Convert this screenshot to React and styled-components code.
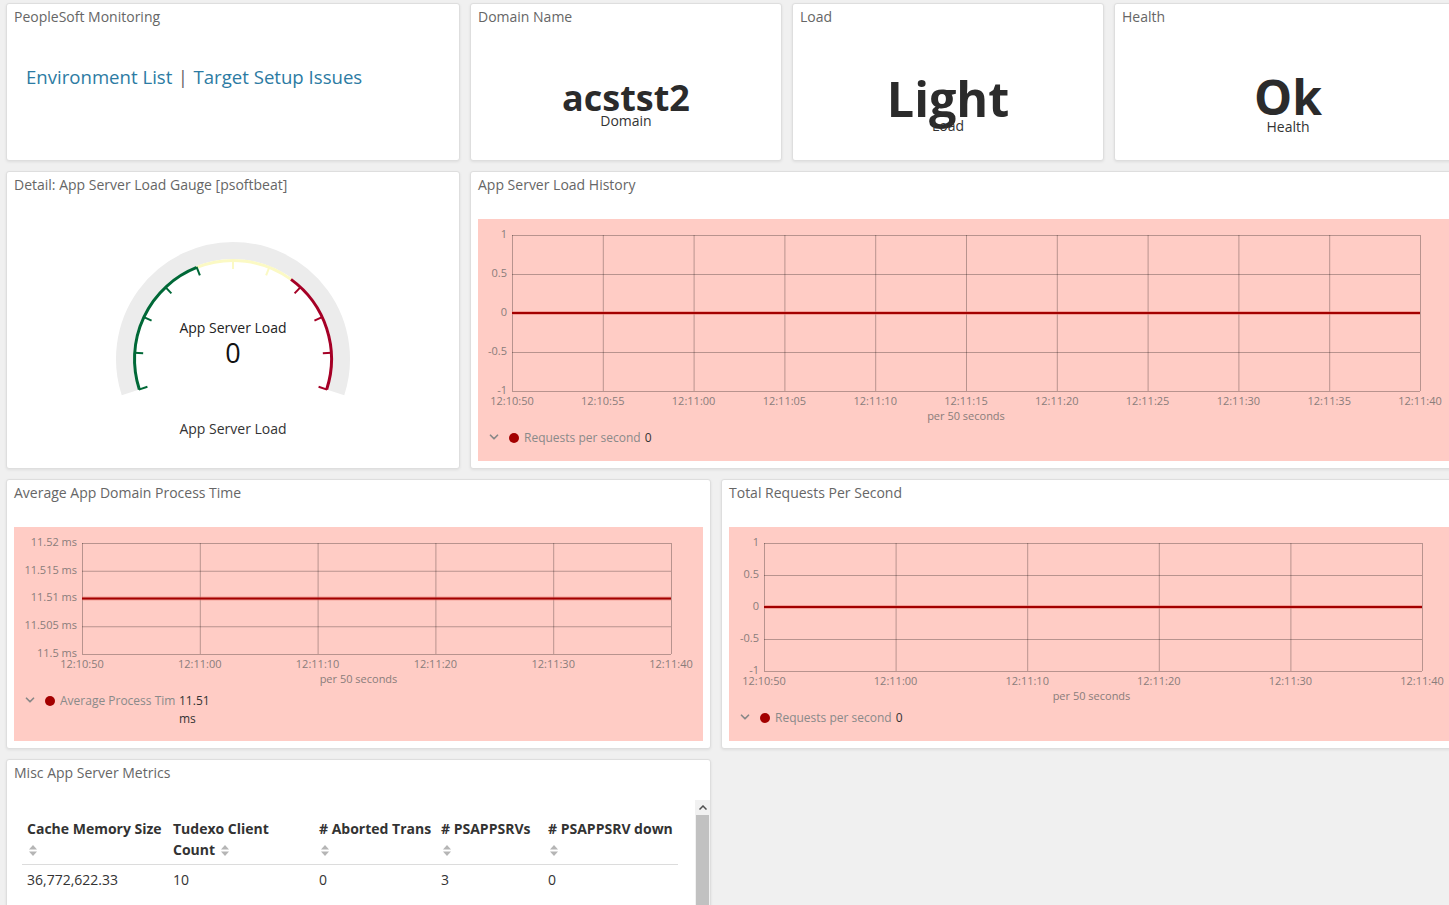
import styled, { createGlobalStyle } from 'styled-components';
import { ChevronDown } from 'lucide-react';

const GlobalStyle = createGlobalStyle`
  html, body {
    margin: 0;
    padding: 0;
    overflow: hidden;
    background: #f0f0f0;
    font-family: 'Open Sans', 'Noto Sans', sans-serif;
  }
`;

// ---- layout ----
const Dashboard = styled.div`
  display: flex;
  flex-direction: column;
  gap: 10px;
  padding: 3px 0 0 6px;
  width: 1460px;
`;

const Row = styled.div`
  display: flex;
  gap: 10px;
  height: ${({ $h }) => $h}px;
`;

const Panel = styled.div`
  display: flex;
  flex-direction: column;
  flex: none;
  width: ${({ $w }) => $w}px;
  box-sizing: border-box;
  background: #fff;
  border: 1px solid #dedede;
  border-radius: 3px;
  box-shadow: 0 1px 3px rgba(0, 0, 0, 0.08);
  overflow: hidden;
`;

const PanelTitle = styled.div`
  height: 24px;
  padding: 3px 0 0 7px;
  box-sizing: border-box;
  font-size: 14px;
  line-height: 20px;
  color: #666;
  flex: none;
`;

// ---- markdown panel ----
const LinksBody = styled.div`
  padding: 37px 0 0 19px;
  font-size: 18.6px;
  line-height: 24px;
  color: #555;
`;

const Link = styled.a`
  color: #2c7ba3;
  text-decoration: none;
`;

const Pipe = styled.span`
  margin: 0 5.5px;
  color: #666;
`;

// ---- metric panels ----
const MetricBody = styled.div`
  flex: 1;
  display: flex;
  flex-direction: column;
  align-items: center;
  justify-content: center;
  padding-top: 20px;
  color: #2b2b2b;
`;

const MetricValue = styled.div`
  font-size: ${({ $size }) => $size}px;
  font-weight: 700;
  line-height: 1;
`;

const MetricLabel = styled.div`
  font-size: 14px;
  line-height: 17px;
  color: #333;
  margin-top: ${({ $mt }) => $mt || 0}px;
`;

// ---- gauge ----
const GaugeBody = styled.div`
  display: flex;
  flex-direction: column;
  align-items: center;
`;

const GaugeLabel = styled.div`
  margin-top: 3px;
  font-size: 14px;
  line-height: 20px;
  color: #333;
`;

// ---- charts ----
const ChartArea = styled.div`
  flex: 1;
  margin: 23px 7px 7px;
  background: #ffccc5;
  display: flex;
  flex-direction: column;
`;

const Legend = styled.div`
  display: flex;
  align-items: flex-start;
  padding: 2px 0 0 ${({ $pl }) => $pl}px;
  font-size: 12px;
  line-height: 18px;
  color: #8a8a8a;
`;

const LegendChevron = styled.span`
  display: flex;
  color: #888;
  margin-top: 1px;
`;

const LegendDot = styled.span`
  width: 10px;
  height: 10px;
  border-radius: 50%;
  background: #a30000;
  margin: 4px 5px 0 8px;
  flex: none;
`;

const LegendName = styled.span`
  white-space: nowrap;
  overflow: hidden;
  max-width: ${({ $max }) => ($max ? `${$max}px` : 'none')};
`;

const LegendValue = styled.span`
  color: #333;
  margin-left: 4px;
  max-width: ${({ $max }) => ($max ? `${$max}px` : 'none')};
`;

// ---- table ----
const ScrollArea = styled.div`
  display: flex;
  margin: 16px 0 0 15px;
  flex: 1;
`;

const TableBox = styled.div`
  flex: 1;
  min-width: 0;
`;

const Table = styled.table`
  width: 656px;
  border-collapse: collapse;
  table-layout: fixed;
  font-size: 14px;
  color: #333;
`;

const Th = styled.th`
  width: ${({ $w }) => $w}px;
  box-sizing: border-box;
  text-align: left;
  font-weight: 700;
  vertical-align: top;
  line-height: 21px;
  padding: 18px 4px 4px 5px;
  border-bottom: 1px solid #dcdcdc;
`;

const Td = styled.td`
  padding: 4px 5px;
  line-height: 21px;
`;

const SortIcon = styled.svg`
  display: inline-block;
  vertical-align: -1px;
  margin-left: 2px;
`;

const Scrollbar = styled.div`
  width: 15px;
  flex: none;
  display: flex;
  flex-direction: column;
  background: #f1f1f1;
`;

const ScrollArrow = styled.div`
  height: 15px;
  display: flex;
  align-items: center;
  justify-content: center;
  color: #505050;
`;

const ScrollThumb = styled.div`
  flex: 1;
  margin: 0 1px;
  background: #c1c1c1;
`;

// ---- drawings ----
const pt = (cx, cy, r, deg) => {
  const a = (deg * Math.PI) / 180;
  return [cx + r * Math.sin(a), cy - r * Math.cos(a)];
};

const arc = (cx, cy, r, a0, a1) => {
  const [x0, y0] = pt(cx, cy, r, a0);
  const [x1, y1] = pt(cx, cy, r, a1);
  const large = a1 - a0 > 180 ? 1 : 0;
  return `M${x0} ${y0} A${r} ${r} 0 ${large} 1 ${x1} ${y1}`;
};

const GREEN = '#006837';
const YELLOW = '#fbf9c4';
const RED = '#a50026';

function Gauge() {
  const cx = 220;
  const cy = 163;
  const toDeg = (f) => -108 + f * 216;
  const ranges = [
    [0, 0.4, GREEN],
    [0.4, 0.667, YELLOW],
    [0.667, 1, RED],
  ];
  const ticks = Array.from({ length: 11 }, (_, k) => k / 10);
  const tickColor = (f) => (f <= 0.4 ? GREEN : f < 0.667 ? YELLOW : RED);
  return (
    <svg width="440" height="220" viewBox="0 0 440 220">
      <path d={arc(cx, cy, 108.5, -108, 108)} stroke="#ececec" strokeWidth="17" fill="none" />
      {ranges.map(([a, b, c]) => (
        <path key={a} d={arc(cx, cy, 98.5, toDeg(a), toDeg(b))} stroke={c} strokeWidth="3" fill="none" />
      ))}
      {ticks.map((f) => {
        const [x0, y0] = pt(cx, cy, 99, toDeg(f));
        const [x1, y1] = pt(cx, cy, 90, toDeg(f));
        return <line key={f} x1={x0} y1={y0} x2={x1} y2={y1} stroke={tickColor(f)} strokeWidth="2" />;
      })}
      <text x={cx} y="133" textAnchor="middle" dominantBaseline="middle" fontSize="14" fill="#222" fontFamily="Open Sans">
        App Server Load
      </text>
      <text x={cx} y="160" textAnchor="middle" dominantBaseline="middle" fontSize="27" fill="#111" fontFamily="Open Sans">
        0
      </text>
    </svg>
  );
}

function LineChart({ width, height, left, right, top, bottom, yLabels, xLabels, lineAt }) {
  const pw = right - left;
  const ph = bottom - top;
  const grid = '#000';
  const labelColor = '#8a7d7b';
  return (
    <svg width={width} height={height} style={{ display: 'block', flex: 'none' }}>
      {yLabels.map((l, i) => {
        const y = top + (ph * i) / (yLabels.length - 1);
        return (
          <g key={l}>
            <line x1={left} x2={right} y1={y + 0.5} y2={y + 0.5} stroke={grid} strokeOpacity="0.28" />
            <text x={left - 5} y={y} textAnchor="end" dominantBaseline="middle" fontSize="11" fill={labelColor} fontFamily="Open Sans">
              {l}
            </text>
          </g>
        );
      })}
      {xLabels.map((l, i) => {
        const x = left + (pw * i) / (xLabels.length - 1);
        return (
          <g key={l}>
            <line x1={x + 0.5} x2={x + 0.5} y1={top} y2={bottom} stroke={grid} strokeOpacity="0.28" />
            <text x={x} y={bottom + 11} textAnchor="middle" dominantBaseline="middle" fontSize="11" fill={labelColor} fontFamily="Open Sans">
              {l}
            </text>
          </g>
        );
      })}
      <line x1={left} x2={right} y1={top + ph * lineAt} y2={top + ph * lineAt} stroke="#e8746c" strokeWidth="4" strokeOpacity="0.5" />
      <line x1={left} x2={right} y1={top + ph * lineAt} y2={top + ph * lineAt} stroke="#a30000" strokeWidth="2" />
      <text x={width / 2} y={bottom + 26} textAnchor="middle" dominantBaseline="middle" fontSize="11" fill={labelColor} fontFamily="Open Sans">
        per 50 seconds
      </text>
    </svg>
  );
}

function ChartLegend({ pl, name, value, nameMax, valueMax }) {
  return (
    <Legend $pl={pl}>
      <LegendChevron>
        <ChevronDown size={14} strokeWidth={3} />
      </LegendChevron>
      <LegendDot />
      <LegendName $max={nameMax}>{name}</LegendName>
      <LegendValue $max={valueMax}>{value}</LegendValue>
    </Legend>
  );
}

function Sort() {
  return (
    <SortIcon width="8" height="11" viewBox="0 0 8 11">
      <path d="M4 0 L8 4.5 H0 Z" fill="#b5b5b5" />
      <path d="M4 11 L8 6.5 H0 Z" fill="#b5b5b5" />
    </SortIcon>
  );
}

const seq = (start, step, n) =>
  Array.from({ length: n }, (_, i) => {
    const s = start + step * i;
    const m = 10 + Math.floor(s / 60);
    const sec = s % 60;
    return `12:${m}:${String(sec).padStart(2, '0')}`;
  });

export default function App() {
  return (
    <>
      <GlobalStyle />
      <Dashboard>
        <Row $h={158}>
          <Panel $w={454}>
            <PanelTitle>PeopleSoft Monitoring</PanelTitle>
            <LinksBody>
              <Link href="#">Environment List</Link>
              <Pipe>|</Pipe>
              <Link href="#">Target Setup Issues</Link>
            </LinksBody>
          </Panel>
          <Panel $w={312}>
            <PanelTitle>Domain Name</PanelTitle>
            <MetricBody>
              <MetricValue $size={36}>acstst2</MetricValue>
              <MetricLabel $mt={-4}>Domain</MetricLabel>
            </MetricBody>
          </Panel>
          <Panel $w={312}>
            <PanelTitle>Load</PanelTitle>
            <MetricBody>
              <MetricValue $size={48.5}>Light</MetricValue>
              <MetricLabel $mt={-5}>Load</MetricLabel>
            </MetricBody>
          </Panel>
          <Panel $w={348}>
            <PanelTitle>Health</PanelTitle>
            <MetricBody>
              <MetricValue $size={48}>Ok</MetricValue>
              <MetricLabel $mt={-3}>Health</MetricLabel>
            </MetricBody>
          </Panel>
        </Row>

        <Row $h={298}>
          <Panel $w={454}>
            <PanelTitle>Detail: App Server Load Gauge [psoftbeat]</PanelTitle>
            <GaugeBody>
              <Gauge />
              <GaugeLabel>App Server Load</GaugeLabel>
            </GaugeBody>
          </Panel>
          <Panel $w={992}>
            <PanelTitle>App Server Load History</PanelTitle>
            <ChartArea>
              <LineChart
                width={976}
                height={208}
                left={34}
                right={942}
                top={16}
                bottom={172}
                yLabels={['1', '0.5', '0', '-0.5', '-1']}
                xLabels={seq(50, 5, 11)}
                lineAt={0.5}
              />
              <ChartLegend pl={9} name="Requests per second" value="0" />
            </ChartArea>
          </Panel>
        </Row>

        <Row $h={270}>
          <Panel $w={705}>
            <PanelTitle>Average App Domain Process Time</PanelTitle>
            <ChartArea>
              <LineChart
                width={689}
                height={163}
                left={68}
                right={657}
                top={16}
                bottom={127}
                yLabels={['11.52 ms', '11.515 ms', '11.51 ms', '11.505 ms', '11.5 ms']}
                xLabels={seq(50, 10, 6)}
                lineAt={0.5}
              />
              <ChartLegend pl={9} name="Average Process Time" value="11.51 ms" nameMax={115} valueMax={34} />
            </ChartArea>
          </Panel>
          <Panel $w={741}>
            <PanelTitle>Total Requests Per Second</PanelTitle>
            <ChartArea>
              <LineChart
                width={725}
                height={180}
                left={35}
                right={693}
                top={16}
                bottom={144}
                yLabels={['1', '0.5', '0', '-0.5', '-1']}
                xLabels={seq(50, 10, 6)}
                lineAt={0.5}
              />
              <ChartLegend pl={9} name="Requests per second" value="0" />
            </ChartArea>
          </Panel>
        </Row>

        <Row $h={300}>
          <Panel $w={705}>
            <PanelTitle>Misc App Server Metrics</PanelTitle>
            <ScrollArea>
              <TableBox>
                <Table>
                  <thead>
                    <tr>
                      <Th $w={146}>Cache Memory Size <Sort /></Th>
                      <Th $w={146}>Tudexo Client Count <Sort /></Th>
                      <Th $w={122}># Aborted Trans <Sort /></Th>
                      <Th $w={107}># PSAPPSRVs <Sort /></Th>
                      <Th $w={135}># PSAPPSRV down <Sort /></Th>
                    </tr>
                  </thead>
                  <tbody>
                    <tr>
                      <Td>36,772,622.33</Td>
                      <Td>10</Td>
                      <Td>0</Td>
                      <Td>3</Td>
                      <Td>0</Td>
                    </tr>
                  </tbody>
                </Table>
              </TableBox>
              <Scrollbar>
                <ScrollArrow>
                  <svg width="8" height="5" viewBox="0 0 8 5">
                    <path d="M0.5 4.5 L4 1 L7.5 4.5" stroke="#505050" strokeWidth="1.5" fill="none" />
                  </svg>
                </ScrollArrow>
                <ScrollThumb />
              </Scrollbar>
            </ScrollArea>
          </Panel>
        </Row>
      </Dashboard>
    </>
  );
}
